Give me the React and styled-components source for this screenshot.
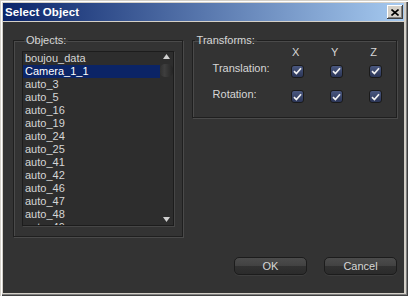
import React from "react";
import styled, { createGlobalStyle } from "styled-components";

const GlobalStyle = createGlobalStyle`
  html, body {
    margin: 0;
    padding: 0;
    background: #d4d0c8;
  }
  body {
    font-family: "Liberation Sans", Arial, sans-serif;
  }
`;

const Window = styled.div`
  width: 408px;
  height: 296px;
  box-sizing: border-box;
  padding: 3px 4px 3px 3px;
  background: #d4d0c8;
  box-shadow: inset 1px 1px 0 #d4d0c8, inset 2px 2px 0 #ffffff,
    inset -1px -1px 0 #404040, inset -2px -2px 0 #808080;
  display: flex;
  flex-direction: column;
`;

const TitleBar = styled.div`
  height: 18px;
  flex: none;
  display: flex;
  align-items: center;
  justify-content: space-between;
  padding: 0 1px 0 2px;
  background: linear-gradient(to right, #0a246a, #a6caf0);
`;

const Title = styled.span`
  color: #fff;
  font-weight: bold;
  font-size: 11.5px;
  letter-spacing: 0.1px;
`;

const CloseButton = styled.div`
  width: 16px;
  height: 14px;
  box-sizing: border-box;
  background: #d4d0c8;
  display: flex;
  align-items: center;
  justify-content: center;
  box-shadow: inset -1px -1px 0 #404040, inset 1px 1px 0 #ffffff,
    inset -2px -2px 0 #808080;
`;

const Content = styled.div`
  flex: 1;
  margin-top: 1px;
  background: #333333;
  display: flex;
  flex-direction: column;
  padding: 12px 7px 18px 10px;
  color: #d6d6d6;
  font-size: 11px;
`;

const TopRow = styled.div`
  display: flex;
  align-items: flex-start;
  gap: 9px;
`;

const Group = styled.fieldset`
  margin: 0;
  min-width: 0;
  box-sizing: border-box;
  width: ${(p) => p.$width}px;
  height: ${(p) => p.$height}px;
  padding: ${(p) => p.$pad};
  border: 1px solid #1f1f1f;
  box-shadow: 1px 1px 0 #4a4a4a, inset 1px 1px 0 #4a4a4a;
`;

const Legend = styled.legend`
  margin-left: 2px;
  padding: 0 2px;
  line-height: 12px;
  font-size: 11px;
  color: #d6d6d6;
`;

const ListBox = styled.div`
  height: 175px;
  box-sizing: border-box;
  border: 1px solid #1c1c1c;
  box-shadow: 1px 1px 0 #464646;
  background: #2d2d2d;
  display: flex;
  overflow: hidden;
`;

const Rows = styled.div`
  flex: 1;
  overflow: hidden;
`;

const Row = styled.div`
  height: 13px;
  line-height: 13px;
  padding-left: 2px;
  white-space: nowrap;
  color: ${(p) => (p.$selected ? "#ffffff" : "#d6d6d6")};
  background: ${(p) => (p.$selected ? "#0b2466" : "transparent")};
`;

const ScrollBar = styled.div`
  width: 13px;
  flex: none;
  display: flex;
  flex-direction: column;
  align-items: center;
  padding: 2px 0 3px;
`;

const Thumb = styled.div`
  width: 13px;
  height: 13px;
  margin-top: 5px;
  border-radius: 5px;
  background: linear-gradient(to right, #303030, #3e3e3e 35%, #242424);
`;

const Spacer = styled.div`
  flex: 1;
`;

const Grid = styled.div`
  display: grid;
  grid-template-columns: 65px 39px 39px 39px;
  grid-template-rows: 12px 26px 25px;
  align-items: center;
  padding-left: 20px;
`;

const AxisHead = styled.div`
  text-align: center;
  line-height: 12px;
  padding-right: 3px;
`;

const RowLabel = styled.div`
  line-height: 13px;
  padding-bottom: 5px;
  white-space: nowrap;
`;

const CheckCell = styled.div`
  display: flex;
  justify-content: center;
`;

const Box = styled.div`
  width: 13px;
  height: 13px;
  box-sizing: border-box;
  border-radius: 3px;
  border: 1px solid #1a1a1a;
  background: linear-gradient(#4a5880, #2b3556);
  display: flex;
  align-items: center;
  justify-content: center;
`;

const ButtonRow = styled.div`
  margin-top: auto;
  display: flex;
  justify-content: flex-end;
  gap: 17px;
`;

const Button = styled.div`
  width: 73px;
  height: 18px;
  box-sizing: border-box;
  border: 1px solid #1c1c1c;
  border-radius: 5px;
  background: linear-gradient(#4c4c4c, #424242 48%, #313131 52%, #2b2b2b);
  box-shadow: 0 1px 0 #3e3e3e;
  color: #d6d6d6;
  font-size: 11px;
  display: flex;
  align-items: center;
  justify-content: center;
`;

const items = [
  "boujou_data",
  "Camera_1_1",
  "auto_3",
  "auto_5",
  "auto_16",
  "auto_19",
  "auto_24",
  "auto_25",
  "auto_41",
  "auto_42",
  "auto_46",
  "auto_47",
  "auto_48",
  "auto_49",
];

function Arrow({ down }) {
  return (
    <svg width="7" height="5" viewBox="0 0 7 5">
      <polygon
        points={down ? "0,0 7,0 3.5,5" : "3.5,0 7,5 0,5"}
        fill="#d0d0d0"
      />
    </svg>
  );
}

function Check() {
  return (
    <svg width="9" height="8" viewBox="0 0 9 8">
      <path
        d="M1 4.2 L3.4 6.5 L8 1.2"
        fill="none"
        stroke="#f2f2f2"
        strokeWidth="1.7"
      />
    </svg>
  );
}

function CheckBox() {
  return (
    <CheckCell>
      <Box>
        <Check />
      </Box>
    </CheckCell>
  );
}

export default function App() {
  return (
    <>
      <GlobalStyle />
      <Window>
        <TitleBar>
          <Title>Select Object</Title>
          <CloseButton>
            <svg width="8" height="7" viewBox="0 0 8 7">
              <path d="M0.5 0.5 L7.5 6.5 M7.5 0.5 L0.5 6.5" stroke="#000" strokeWidth="1.6" />
            </svg>
          </CloseButton>
        </TitleBar>
        <Content>
          <TopRow>
            <Group $width={170} $height={203} $pad="5px 8px 0">
              <Legend>Objects:</Legend>
              <ListBox>
                <Rows>
                  {items.map((name, i) => (
                    <Row key={name} $selected={i === 1}>
                      {name}
                    </Row>
                  ))}
                </Rows>
                <ScrollBar>
                  <Arrow />
                  <Thumb />
                  <Spacer />
                  <Arrow down />
                </ScrollBar>
              </ListBox>
            </Group>
            <Group $width={206} $height={84} $pad="0">
              <Legend>Transforms:</Legend>
              <Grid>
                <div />
                <AxisHead>X</AxisHead>
                <AxisHead>Y</AxisHead>
                <AxisHead>Z</AxisHead>
                <RowLabel>Translation:</RowLabel>
                <CheckBox />
                <CheckBox />
                <CheckBox />
                <RowLabel>Rotation:</RowLabel>
                <CheckBox />
                <CheckBox />
                <CheckBox />
              </Grid>
            </Group>
          </TopRow>
          <ButtonRow>
            <Button>OK</Button>
            <Button>Cancel</Button>
          </ButtonRow>
        </Content>
      </Window>
    </>
  );
}
